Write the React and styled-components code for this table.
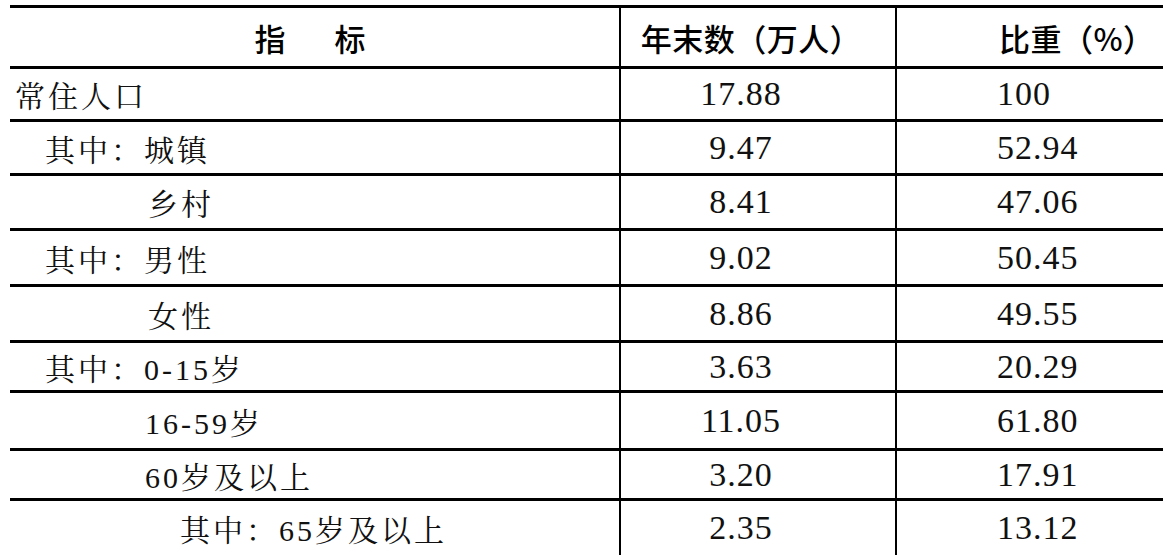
import React from 'react';
import styled, { createGlobalStyle } from 'styled-components';

const GlobalStyle = createGlobalStyle`
  * {
    box-sizing: border-box;
    margin: 0;
    padding: 0;
  }
  body {
    background: #fff;
    color: #111;
    font: 400 30px "Liberation Serif", "Noto Serif CJK SC", serif;
  }
`;

const Table = styled.div`
  margin: 5px 0 0 10px;
  width: 1153px;
  border-top: 3px solid #000;
`;

const Row = styled.div`
  display: grid;
  grid-template-columns: 609px 276px 268px;
  height: ${p => p.$h}px;
  border-bottom: ${p => (p.$last ? '1px solid #c4c4c4' : '3px solid #000')};
`;

const HeadCell = styled.div`
  display: flex;
  align-items: center;
  justify-content: ${p => p.$justify || 'center'};
  padding: ${p => p.$pad || '0'};
  border-left: ${p => (p.$divider ? '2px solid #000' : 'none')};
  font: 500 31px "Noto Sans CJK SC", sans-serif;
  letter-spacing: ${p => p.$spacing || '0.5px'};
  color: #000;
  white-space: pre;
`;

const LabelCell = styled.div`
  display: flex;
  align-items: center;
  padding-left: ${p => p.$indent}px;
  font: 400 30px "Liberation Serif", "Noto Serif CJK SC", serif;
  letter-spacing: 3px;
  white-space: pre;
`;

const NumCell = styled.div`
  display: flex;
  align-items: center;
  justify-content: ${p => (p.$left ? 'flex-start' : 'center')};
  padding: ${p => (p.$left ? '0 0 0 100px' : '0 34px 0 0')};
  border-left: 2px solid #000;
  font: 400 34px "Liberation Serif", serif;
  letter-spacing: 1px;
`;

const rows = [
  { label: '常住人口', indent: 5, count: '17.88', share: '100', h: 53 },
  { label: '其中：城镇', indent: 35, count: '9.47', share: '52.94', h: 54 },
  { label: '乡村', indent: 138, count: '8.41', share: '47.06', h: 55 },
  { label: '其中：男性', indent: 35, count: '9.02', share: '50.45', h: 56 },
  { label: '女性', indent: 138, count: '8.86', share: '49.55', h: 56 },
  { label: '其中：0-15岁', indent: 35, count: '3.63', share: '20.29', h: 50 },
  { label: '16-59岁', indent: 135, count: '11.05', share: '61.80', h: 58 },
  { label: '60岁及以上', indent: 135, count: '3.20', share: '17.91', h: 50 },
  { label: '其中：65岁及以上', indent: 170, count: '2.35', share: '13.12', h: 55 },
];

export default function App() {
  return (
    <>
      <GlobalStyle />
      <Table>
        <Row $h={61}>
          <HeadCell $spacing="9px">指　标</HeadCell>
          <HeadCell $divider $pad="0 14px 0 0">年末数（万人）</HeadCell>
          <HeadCell $divider $justify="flex-start" $pad="0 0 0 102px">比重（%）</HeadCell>
        </Row>
        {rows.map((r, i) => (
          <Row key={r.label} $h={r.h} $last={i === rows.length - 1}>
            <LabelCell $indent={r.indent}>{r.label}</LabelCell>
            <NumCell>{r.count}</NumCell>
            <NumCell $left>{r.share}</NumCell>
          </Row>
        ))}
      </Table>
    </>
  );
}
